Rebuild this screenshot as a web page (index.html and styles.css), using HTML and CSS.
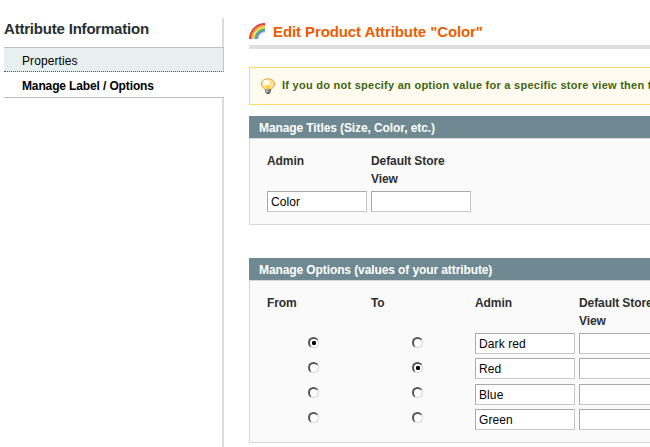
FILE: index.html
```html
<!DOCTYPE html>
<html lang="en">
<head>
<meta charset="utf-8">
<title>Edit Product Attribute</title>
<link rel="stylesheet" href="styles.css">
</head>
<body>
<div class="layout">
  <aside class="sidebar">
    <h3>Attribute Information</h3>
    <nav>
      <a class="tab">Properties</a>
      <a class="tab active">Manage Label / Options</a>
    </nav>
    <div class="rail"></div>
  </aside>
  <main>
    <header class="page-head">
      <svg width="17" height="16" viewBox="0 0 17 16" fill="none">
        <path d="M1 16A15 15 0 0 1 16 1" stroke="#dc4038" stroke-width="2"/>
        <path d="M2.800 16A13.200 13.200 0 0 1 16 2.800" stroke="#f4913a" stroke-width="1.800"/>
        <path d="M4.500 16A11.500 11.500 0 0 1 16 4.500" stroke="#fbe25c" stroke-width="1.800"/>
        <path d="M6.100 16A9.900 9.900 0 0 1 16 6.100" stroke="#6cb850" stroke-width="1.600"/>
        <path d="M7.700 16A8.300 8.300 0 0 1 16 7.700" stroke="#4c82d6" stroke-width="1.800"/>
        <path d="M9 16A7 7 0 0 1 16 9" stroke="#b3c4ee" stroke-width="1"/>
      </svg>
      <h1>Edit Product Attribute "Color"</h1>
    </header>
    <div class="notice">
      <svg width="16" height="16" viewBox="0 0 16 16">
        <path d="M8 .8C3.900.8 1.300 3.100 1.300 6c0 2.600 2.500 3.400 3.300 5.300h6.800c.8-1.900 3.300-2.700 3.300-5.300C14.700 3.100 12.100.8 8 .8Z" fill="#fde08a" stroke="#dfa052"/>
        <ellipse cx="6.300" cy="4.700" rx="3.600" ry="2.700" fill="#fffdf0"/>
        <path d="M6 11V7.500h4V11Z" fill="#ffce3c"/>
        <path d="M5 11h6v2.700L9.500 15.500h-3L5 13.700Z" fill="#77797b"/>
        <path d="M5.500 12h3M6 13.800h2" stroke="#dedede"/>
        <path d="M6.500 15.300h3" stroke="#3c3c3c"/>
      </svg>
      <span>If you do not specify an option value for a specific store view then the</span>
    </div>
    <section class="titles">
      <h4>Manage Titles (Size, Color, etc.)</h4>
      <div class="panel">
        <div class="col"><div class="label">Admin</div><input value="Color"></div>
        <div class="col"><div class="label">Default Store<br>View</div><input></div>
      </div>
    </section>
    <section class="options">
      <h4>Manage Options (values of your attribute)</h4>
      <div class="panel">
        <div class="col"><div class="label">From</div><div class="radios"><i class="radio on"></i><i class="radio"></i><i class="radio"></i><i class="radio"></i></div></div>
        <div class="col"><div class="label">To</div><div class="radios"><i class="radio"></i><i class="radio on"></i><i class="radio"></i><i class="radio"></i></div></div>
        <div class="col"><div class="label">Admin</div><input value="Dark red"><input value="Red"><input value="Blue"><input value="Green"></div>
        <div class="col"><div class="label">Default Store<br>View</div><input><input><input><input></div>
      </div>
    </section>
  </main>
</div>
</body>
</html>
```
FILE: styles.css
```css
* { box-sizing: border-box; }
body {
  margin: 0;
  width: 650px;
  height: 447px;
  overflow: hidden;
  background: #fff;
  font: 12px/18px "Liberation Sans", Arial, sans-serif;
  color: #2f2f2f;
}
h1, h3, h4 { margin: 0; }
.layout { display: flex; height: 447px; padding: 18px 0 0 4px; }

.sidebar { display: flex; flex-direction: column; width: 220px; flex: none; }
.sidebar h3 {
  height: 29px;
  border-right: 2px solid #dcdcdc;
  font-size: 15px;
  line-height: 22px;
  letter-spacing: -0.2px;
  color: #253033;
}
.tab {
  display: block;
  height: 25px;
  padding-left: 18px;
  background: #e7efef;
  border-top: 1px solid #bebebe;
  border-right: 1px solid #b8cccc;
  border-bottom: 1px dotted #555;
  line-height: 26px;
  letter-spacing: 0.1px;
  color: #000;
}
.tab.active {
  height: 26px;
  background: #fff;
  border-top: 0;
  border-right: 0;
  border-bottom: 1px solid #bebebe;
  line-height: 28px;
  letter-spacing: -0.13px;
  font-weight: bold;
}
.rail { flex: 1; border-right: 2px solid #dcdcdc; }

main { flex: 1; min-width: 0; margin-left: 25px; overflow: hidden; }
.page-head {
  display: flex;
  height: 31px;
  padding-top: 5px;
  gap: 7px;
  border-bottom: 4px solid #dfdfdf;
}
.page-head h1 {
  font-size: 15px;
  line-height: 18px;
  letter-spacing: -0.1px;
  color: #eb5e00;
  white-space: nowrap;
}
.notice {
  display: flex;
  gap: 6px;
  height: 38px;
  margin-top: 18px;
  padding: 10px 0 0 10px;
  overflow: hidden;
  border: 1px solid #ffd967;
  border-right: 0;
  background: #fffbf0;
  font-size: 11px;
  font-weight: bold;
  line-height: 15px;
  letter-spacing: 0.26px;
  color: #3d6611;
  white-space: nowrap;
}
.notice svg { flex: none; }
h4 {
  height: 22px;
  padding-left: 10px;
  background: #6f8992;
  font-size: 12px;
  line-height: 24px;
  letter-spacing: -0.1px;
  color: #fff;
}
.titles { margin-top: 11px; }
.options { margin-top: 33px; }
.panel {
  display: flex;
  gap: 4px;
  height: 87px;
  padding: 13px 0 0 17px;
  overflow: hidden;
  border: 1px solid #d6d6d6;
  border-right: 0;
  background: #fafafa;
}
.options .panel { height: 163px; }
.col { flex: none; width: 100px; }
.label { height: 39px; font-weight: bold; letter-spacing: -0.08px; }
input {
  display: block;
  width: 100px;
  height: 21px;
  margin: 0 0 4.333px;
  padding: 1px 3px 0;
  border: 1px solid;
  border-color: #aaa #c8c8c8 #c8c8c8 #aaa;
  background: #fff;
  font: 12px "Liberation Sans", Arial, sans-serif;
  letter-spacing: 0.1px;
  color: #000;
}
.radios { display: flex; flex-direction: column; gap: 14px; padding: 4px 0 0 41px; }
.radio {
  width: 11px;
  height: 11px;
  border: 1px solid;
  border-width: 2px 1px 1px 2px;
  border-color: #555 #d8d4cc #d8d4cc #555;
  border-radius: 50%;
  background: #fff;
}
.radio.on { background: radial-gradient(circle at 4px 4px, #000 1.900px, #fff 2.400px); }
```
